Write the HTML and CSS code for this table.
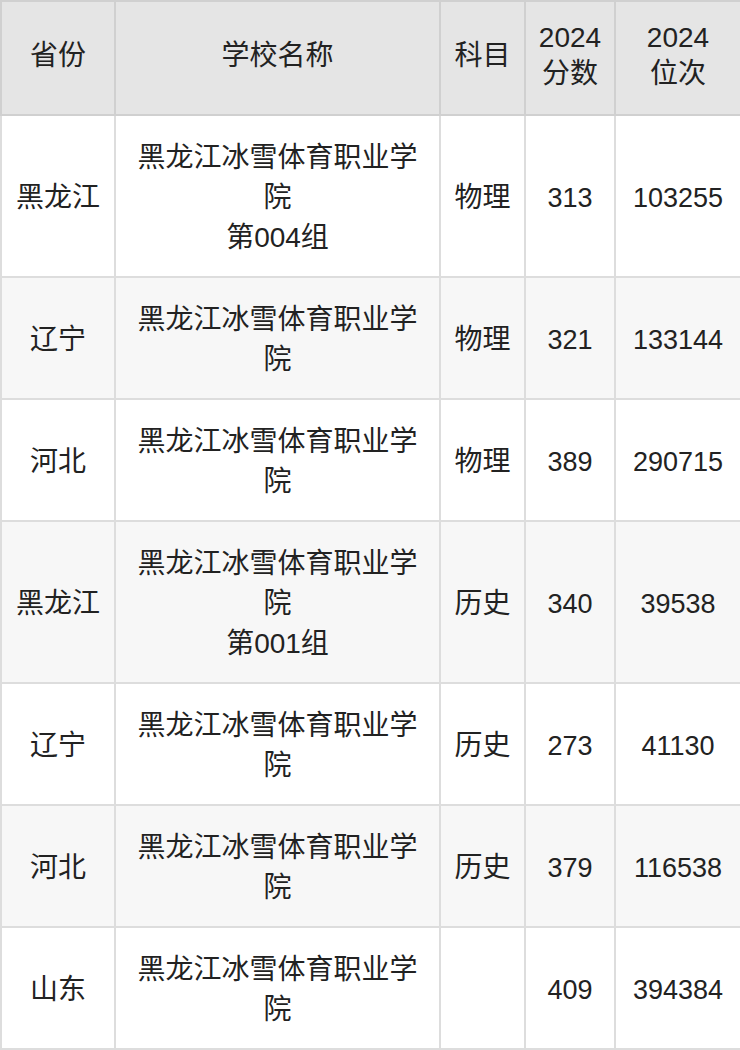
FILE: index.html
```html
<!DOCTYPE html>
<html lang="zh">
<head>
<meta charset="utf-8">
<link rel="stylesheet" href="styles.css">
</head>
<body>
<table class="score-table">
  <colgroup>
    <col class="c-prov">
    <col class="c-school">
    <col class="c-subj">
    <col class="c-score">
    <col class="c-rank">
  </colgroup>
  <thead>
    <tr>
      <th>省份</th>
      <th>学校名称</th>
      <th>科目</th>
      <th>2024<br>分数</th>
      <th>2024<br>位次</th>
    </tr>
  </thead>
  <tbody>
    <tr>
      <td>黑龙江</td>
      <td>黑龙江冰雪体育职业学院<br>第004组</td>
      <td>物理</td>
      <td>313</td>
      <td>103255</td>
    </tr>
    <tr>
      <td>辽宁</td>
      <td>黑龙江冰雪体育职业学院</td>
      <td>物理</td>
      <td>321</td>
      <td>133144</td>
    </tr>
    <tr>
      <td>河北</td>
      <td>黑龙江冰雪体育职业学院</td>
      <td>物理</td>
      <td>389</td>
      <td>290715</td>
    </tr>
    <tr>
      <td>黑龙江</td>
      <td>黑龙江冰雪体育职业学院<br>第001组</td>
      <td>历史</td>
      <td>340</td>
      <td>39538</td>
    </tr>
    <tr>
      <td>辽宁</td>
      <td>黑龙江冰雪体育职业学院</td>
      <td>历史</td>
      <td>273</td>
      <td>41130</td>
    </tr>
    <tr>
      <td>河北</td>
      <td>黑龙江冰雪体育职业学院</td>
      <td>历史</td>
      <td>379</td>
      <td>116538</td>
    </tr>
    <tr>
      <td>山东</td>
      <td>黑龙江冰雪体育职业学院</td>
      <td></td>
      <td>409</td>
      <td>394384</td>
    </tr>
  </tbody>
</table>
</body>
</html>
```
FILE: styles.css
```css
html, body {
  margin: 0;
  padding: 0;
  background: #ffffff;
}

.score-table {
  width: 740px;
  table-layout: fixed;
  border-collapse: collapse;
  font-family: "Liberation Sans", "Noto Sans CJK SC", sans-serif;
  font-size: 28px;
  line-height: 40px;
  color: #222222;
}

.c-prov { width: 114px; }
.c-school { width: 325px; }
.c-subj { width: 85px; }
.c-score { width: 90px; }
.c-rank { width: 126px; }

.score-table th,
.score-table td {
  border: 2px solid #dddddd;
  text-align: center;
  vertical-align: middle;
  font-weight: normal;
}

.score-table th {
  background: #e5e5e5;
  border-color: #d0d0d0;
  line-height: 36px;
  padding: 18px 4px 22px;
}

.score-table td {
  padding: 22px 4px 18px;
}

.score-table td:nth-child(2) {
  padding-left: 20px;
  padding-right: 20px;
}

.score-table td:nth-child(4),
.score-table td:nth-child(5) {
  font-size: 27px;
}

.score-table tbody tr:nth-child(even) td {
  background: #f7f7f7;
}
```
